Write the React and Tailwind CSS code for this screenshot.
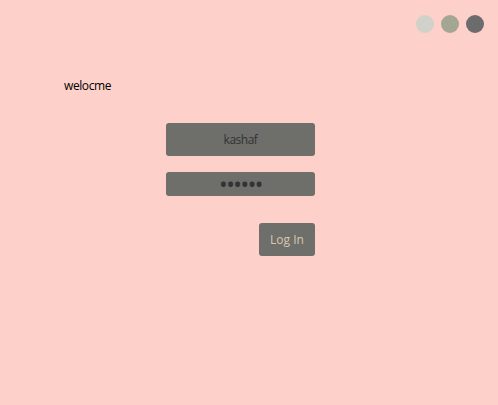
import React from 'react';

const App = () => {
  return (
    <div className="w-[498px] h-[405px] bg-[#fdd0c9] flex flex-col" style={{ fontFamily: '"Open Sans", sans-serif' }}>
      <div className="flex justify-end gap-[7px] pt-[15px] pr-[14px]">
        <span className="w-[18px] h-[18px] rounded-full bg-[#d0d1c9]" />
        <span className="w-[18px] h-[18px] rounded-full bg-[#a3a693]" />
        <span className="w-[18px] h-[18px] rounded-full bg-[#6c6c6c]" />
      </div>
      <p className="ml-[64px] mt-[45px] text-[12px] leading-[16px] tracking-[-0.4px] text-black">welocme</p>
      <div className="ml-[166px] mt-[29px] w-[149px] flex flex-col">
        <input
          readOnly
          value="kashaf"
          className="h-[33px] w-full rounded-[3px] bg-[#6e6e6b] text-center text-[12px] tracking-[-0.5px] text-[#333] outline-none"
        />
        <input
          readOnly
          value="••••••"
          className="mt-[16px] h-[24px] w-full rounded-[3px] bg-[#6e6e6b] text-center text-[23px] leading-[24px] tracking-[-1.5px] text-[#333] outline-none"
        />
        <button className="mt-[27px] self-end w-[56px] h-[33px] rounded-[3px] bg-[#6e6e6b] text-[12px] text-[#d9c8b0]">
          Log In
        </button>
      </div>
    </div>
  );
};

export default App;
